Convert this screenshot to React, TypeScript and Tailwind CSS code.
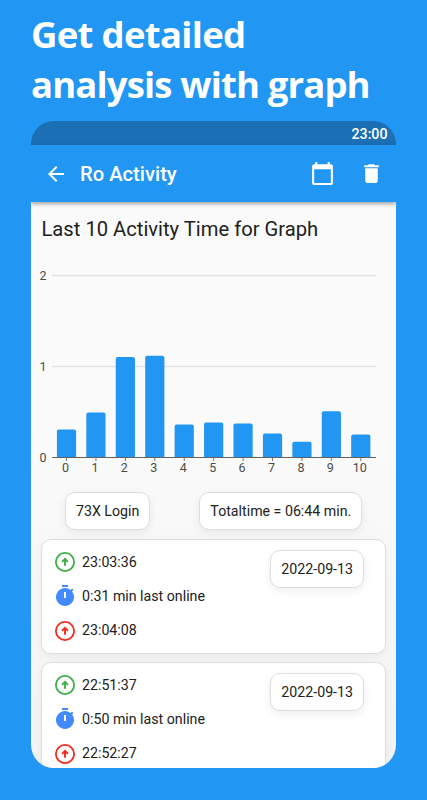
import React from "react"

const bars = [28, 45, 100.5, 101.8, 33, 35, 34, 24, 15.8, 46.2, 22.9]

const sessions = [
  { login: "23:03:36", duration: "0:31 min last online", logout: "23:04:08", date: "2022-09-13" },
  { login: "22:51:37", duration: "0:50 min last online", logout: "22:52:27", date: "2022-09-13" },
]

function ArrowCircle({ className }: { className: string }) {
  return (
    <svg viewBox="0 0 24 24" fill="none" stroke="currentColor" className={`size-6 ${className}`}>
      <circle cx="12" cy="12" r="9.1" strokeWidth="1.8" />
      <path d="M12 15.8V9.4M9 11.8l3-3 3 3" strokeWidth="1.9" />
    </svg>
  )
}

function Timer() {
  return (
    <svg viewBox="0 0 24 24" fill="currentColor" className="size-6 text-[#448aff]">
      <path d="M9 1h6v2H9z" />
      <path
        fillRule="evenodd"
        d="M19.03 7.39l1.42-1.42c-.43-.51-.9-.99-1.41-1.41l-1.42 1.42A8.96 8.96 0 0 0 12 4a9 9 0 1 0 7.03 3.39zM13 14h-2V8h2z"
      />
    </svg>
  )
}

function Chart() {
  return (
    <svg
      width="365"
      height="230"
      viewBox="0 0 365 230"
      className="block font-[Roboto,sans-serif] text-[12.5px]"
      fill="#4a4a4a"
    >
      {[2, 1].map((n) => (
        <path key={n} d={`M21 ${205.5 - n * 91}H345`} stroke="#e4e4e4" strokeWidth="1.4" />
      ))}
      {[2, 1, 0].map((n) => (
        <text key={n} x="12" y={210 - n * 91} textAnchor="middle">
          {n}
        </text>
      ))}
      {bars.map((h, i) => {
        const x = 25.9 + i * 29.43
        const top = 205.5 - h
        return (
          <g key={i}>
            <path
              d={`M${x} 205.5V${top + 2}q0 -2 2 -2h15.2q2 0 2 2V205.5z`}
              fill="#2196f3"
            />
            <path d={`M${x + 9.6} 206v3`} stroke="#777" />
            <text x={x + 8.6} y="220" textAnchor="middle">
              {i}
            </text>
          </g>
        )
      })}
      <path d="M21 205.5H345" stroke="#616161" />
    </svg>
  )
}

function Pill({ children }: { children: React.ReactNode }) {
  return (
    <div className="flex h-[38px] items-center rounded-[10px] border border-[#dedede] bg-white px-2.5 pt-[2px] text-[14.2px] shadow-[0_3px_10px_rgba(0,0,0,0.07)]">
      {children}
    </div>
  )
}

export default function App() {
  return (
    <div className="h-[800px] w-[427px] overflow-hidden bg-[#2196f3] font-[Roboto,sans-serif]">
      <h1 className="h-[121px] pt-[9px] pl-[31px] font-['Open_Sans',sans-serif] text-[36.5px] leading-[50px] font-bold whitespace-nowrap text-white">
        <span className="tracking-[-0.7px]">Get detailed</span>
        <br />
        <span className="tracking-[-0.85px]">analysis with graph</span>
      </h1>

      <div className="ml-[31px] flex h-[647px] w-[365px] flex-col overflow-hidden rounded-[23px] bg-[#2196f3]">
        <div className="flex h-6 shrink-0 items-center justify-end bg-[#1a6fb5] pt-[3px] pr-[8.5px] text-[14.2px] font-medium text-white">
          23:00
        </div>
        <header className="z-10 flex h-[57px] shrink-0 items-center bg-[#2196f3] pr-3 pl-[13px] text-white shadow-[0_2px_4px_rgba(0,0,0,0.35)]">
          <svg viewBox="0 0 24 24" fill="currentColor" className="size-6">
            <path d="M20 11H7.83l5.59-5.59L12 4l-8 8 8 8 1.41-1.41L7.83 13H20v-2z" />
          </svg>
          <span className="ml-3 flex-1 pt-[2px] text-[20.2px] font-medium">Ro Activity</span>
          <svg viewBox="0 0 24 24" fill="currentColor" className="size-[25px]">
            <path d="M20 3h-1V1h-2v2H7V1H5v2H4c-1.1 0-2 .9-2 2v16c0 1.1.9 2 2 2h16c1.1 0 2-.9 2-2V5c0-1.1-.9-2-2-2zm0 18H4V8h16v13z" />
          </svg>
          <svg viewBox="0 0 24 24" fill="currentColor" className="ml-6 size-[25px]">
            <path d="M6 19c0 1.1.9 2 2 2h8c1.1 0 2-.9 2-2V7H6v12zM19 4h-3.5l-1-1h-5l-1 1H5v2h14V4z" />
          </svg>
        </header>

        <main className="min-h-0 flex-1 bg-linear-to-b from-[#fafafa] from-45% to-[#f3f3f3] text-[#212121]">
          <h2 className="h-[50px] pt-[13px] pl-[10.5px] text-[20.2px] leading-7">
            Last 10 Activity Time for Graph
          </h2>
          <Chart />
          <div className="flex h-[57px] gap-[49px] pt-[10px] pl-[34px]">
            <Pill>73X Login</Pill>
            <Pill>Totaltime = 06:44 min.</Pill>
          </div>
          <div className="flex flex-col gap-2 px-2.5">
            {sessions.map((s) => (
              <div
                key={s.login}
                className="flex h-[115px] justify-between rounded-[10px] border border-[#dedede] bg-white pt-[10px] pr-[21px] pl-[10.5px] text-[14.2px] shadow-[0_3px_10px_rgba(0,0,0,0.05)]"
              >
                <div className="flex flex-col gap-[10.3px]">
                  <div className="flex h-6 items-center gap-[5.5px]">
                    <ArrowCircle className="text-[#3cae46]" />
                    <span className="pt-[2px]">{s.login}</span>
                  </div>
                  <div className="flex h-6 items-center gap-[5.5px]">
                    <Timer />
                    <span className="pt-px">{s.duration}</span>
                  </div>
                  <div className="flex h-6 items-center gap-[5.5px]">
                    <ArrowCircle className="text-[#f02c1d]" />
                    <span className="pt-px">{s.logout}</span>
                  </div>
                </div>
                <Pill>{s.date}</Pill>
              </div>
            ))}
          </div>
        </main>
      </div>
    </div>
  )
}
